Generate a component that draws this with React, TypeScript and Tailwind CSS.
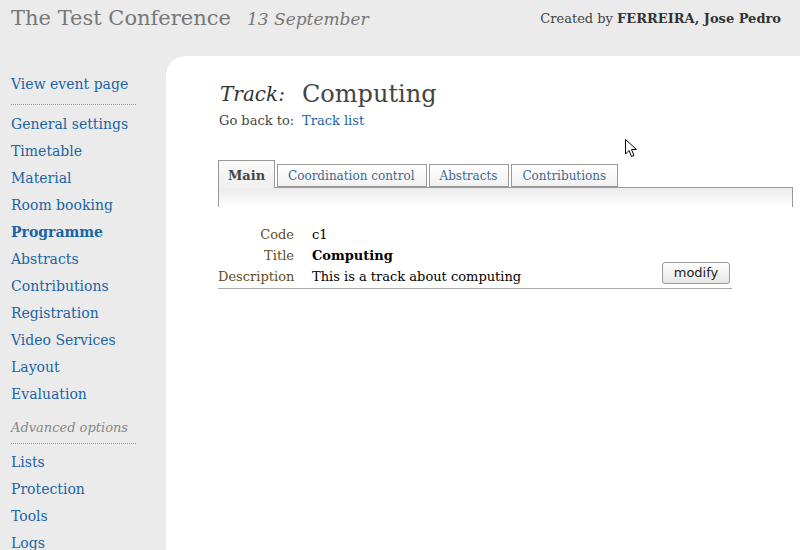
import React from 'react';

const serif = { fontFamily: '"DejaVu Serif", "Liberation Serif", serif' };

const mainLinks = [
  'General settings',
  'Timetable',
  'Material',
  'Room booking',
  'Programme',
  'Abstracts',
  'Contributions',
  'Registration',
  'Video Services',
  'Layout',
  'Evaluation',
];

const advancedLinks = ['Lists', 'Protection', 'Tools', 'Logs'];

const SideLink = ({ label, active }: { label: string; active?: boolean }) => (
  <a
    href="#"
    className={`block h-[27px] leading-[27px] text-[14px] text-[#1b64a6] whitespace-nowrap ${
      active ? 'font-bold' : ''
    }`}
  >
    {label}
  </a>
);

const Tab = ({ label, active }: { label: string; active?: boolean }) =>
  active ? (
    <div className="relative z-10 -mb-px h-[28px] w-[57px] border border-b-0 border-[#999] bg-gradient-to-b from-[#fafafa] to-[#efefef] text-center text-[13px] font-bold leading-[30px] text-[#444]">
      {label}
    </div>
  ) : (
    <div className="ml-[2px] h-[23px] border border-[#999] bg-gradient-to-b from-white to-[#f1f1f1] pl-[10px] pr-[11px] text-[12px] leading-[22px] text-[#3d6a94]">
      {label}
    </div>
  );

export default function App() {
  return (
    <div className="relative h-[550px] w-[800px] overflow-hidden bg-[#ebebeb]" style={serif}>
      {/* header */}
      <div className="flex h-[56px] items-start justify-between pl-[11px] pr-[19px] pt-[5px]">
        <div className="flex items-baseline gap-[16px] text-[#777]">
          <span className="text-[21px] leading-[26px]">The Test Conference</span>
          <span className="text-[17px] italic">13 September</span>
        </div>
        <div className="pt-[4px] text-[13px] text-[#444]">
          Created by <span className="font-bold text-[#333]">FERREIRA, Jose Pedro</span>
        </div>
      </div>

      <div className="flex h-[494px]">
        {/* sidebar */}
        <div className="w-[166px] shrink-0 pl-[11px] pt-[15px]">
          <div className="w-[125px]">
            <SideLink label="View event page" />
            <div className="mt-[6px] border-b border-dotted border-[#999]" />
            <div className="mt-[6px]">
              {mainLinks.map((l) => (
                <SideLink key={l} label={l} active={l === 'Programme'} />
              ))}
            </div>
            <div className="mt-[10px] border-b border-dotted border-[#999] pb-[5px] text-[13px] italic leading-[20px] text-[#888]">
              Advanced options
            </div>
            <div className="mt-[5px]">
              {advancedLinks.map((l) => (
                <SideLink key={l} label={l} />
              ))}
            </div>
          </div>
        </div>

        {/* main panel */}
        <div className="flex-1 rounded-tl-[20px] bg-white pl-[52px] pr-[8px] pt-[23px]">
          <div className="flex h-[30px] items-center">
            <span className="ml-[2px] w-[82px] text-[20px] italic text-[#333]">Track:</span>
            <span className="text-[24px] text-[#444]">Computing</span>
          </div>
          <div className="mt-[3px] flex h-[18px] items-center text-[13px] text-[#444]">
            <span className="ml-[1px] w-[83px]">Go back to:</span>
            <a href="#" className="text-[#1b64a6]">
              Track list
            </a>
          </div>

          {/* tabs */}
          <div className="mt-[30px] flex items-end">
            <Tab label="Main" active />
            <Tab label="Coordination control" />
            <Tab label="Abstracts" />
            <Tab label="Contributions" />
          </div>
          <div className="h-[20px] w-[575px] border border-b-0 border-[#999] bg-gradient-to-b from-[#ececec] to-white" />

          {/* details */}
          <div className="mt-[17px] w-[514px] border-b border-[#aaa] text-[13px]">
            <div className="flex h-[21px] items-center">
              <span className="w-[76px] text-right text-[#5e4d1f]">Code</span>
              <span className="ml-[18px] text-black">c1</span>
            </div>
            <div className="flex h-[21px] items-center">
              <span className="w-[76px] text-right text-[#5e4d1f]">Title</span>
              <span className="ml-[18px] font-bold text-black">Computing</span>
            </div>
            <div className="flex h-[22px] items-center">
              <span className="w-[76px] text-right text-[#5e4d1f]">Description</span>
              <span className="ml-[18px] flex-1 text-black">This is a track about computing</span>
              <button
                className="mb-[8px] mr-[2px] h-[22px] w-[68px] rounded-[3px] border border-[#999] bg-gradient-to-b from-white to-[#e6e6e6] text-[13px] text-[#222]"
                style={{ fontFamily: '"DejaVu Sans", "Liberation Sans", sans-serif' }}
              >
                modify
              </button>
            </div>
          </div>
        </div>
      </div>

      {/* mouse cursor */}
      <svg className="absolute left-[625px] top-[139px]" width="13" height="20" viewBox="0 0 13 20">
        <path d="M0.5 0.5 L0.5 15 L4 11.5 L6.5 17.5 L9 16.5 L6.5 10.5 L11.5 10.5 Z" fill="white" stroke="black" strokeWidth="1" />
      </svg>
    </div>
  );
}
